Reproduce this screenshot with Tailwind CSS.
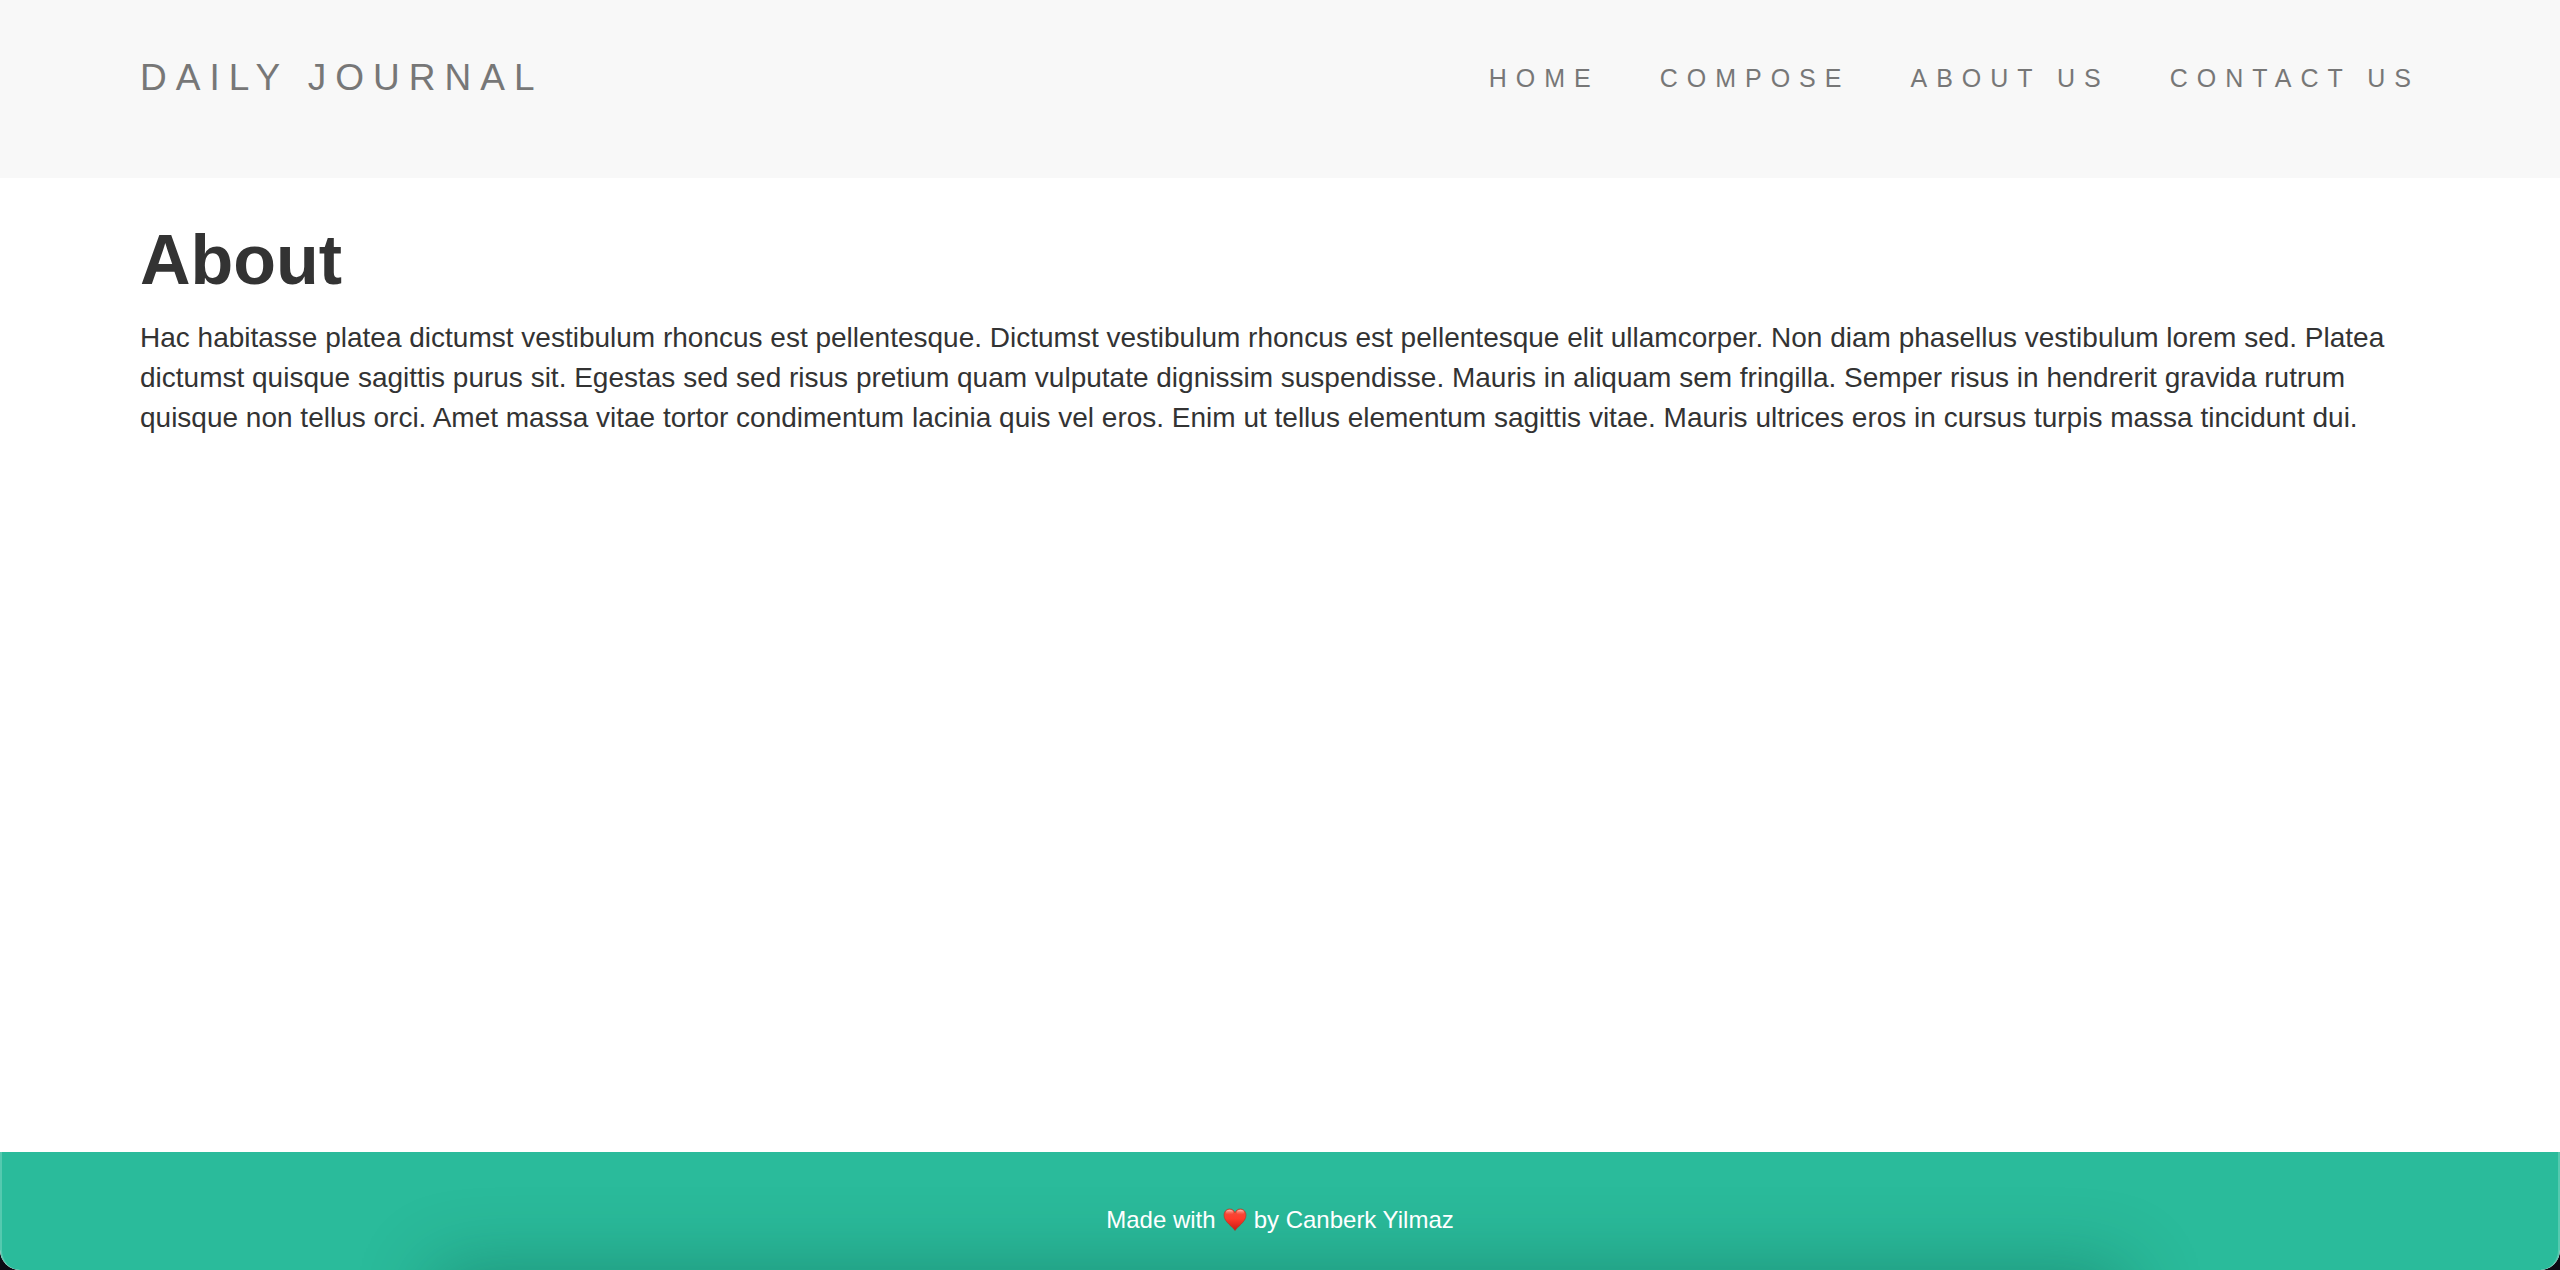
<!DOCTYPE html>
<html lang="en">
<head>
<meta charset="utf-8">
<meta name="viewport" content="width=device-width, initial-scale=1">
<title>Daily Journal</title>
<script src="https://cdn.jsdelivr.net/npm/@tailwindcss/browser@4"></script>
</head>
<body class="bg-[#0b0b14]">
<div class="flex min-h-screen flex-col overflow-hidden rounded-b-[20px] bg-white font-['Liberation_Sans',Arial,sans-serif] text-[28px] leading-10 text-[#333]">
  <header class="bg-[#f8f8f8] px-[140px] pt-[58px] pb-20">
    <nav class="flex flex-wrap items-center justify-between gap-x-10 text-[#777]">
      <a href="#" class="text-[37px] tracking-[9px]">DAILY JOURNAL</a>
      <ul class="flex flex-wrap gap-x-[60px] text-[25px] tracking-[9px]">
        <li><a href="#">HOME</a></li>
        <li><a href="#">COMPOSE</a></li>
        <li><a href="#">ABOUT US</a></li>
        <li><a href="#">CONTACT US</a></li>
      </ul>
    </nav>
  </header>
  <main class="flex-1 px-[140px] pt-[42px]">
    <h1 class="text-[70px] leading-[80px] font-bold">About</h1>
    <p class="mt-[18px]">Hac habitasse platea dictumst vestibulum rhoncus est pellentesque. Dictumst vestibulum rhoncus est pellentesque elit ullamcorper. Non diam phasellus vestibulum lorem sed. Platea dictumst quisque sagittis purus sit. Egestas sed sed risus pretium quam vulputate dignissim suspendisse. Mauris in aliquam sem fringilla. Semper risus in hendrerit gravida rutrum quisque non tellus orci. Amet massa vitae tortor condimentum lacinia quis vel eros. Enim ut tellus elementum sagittis vitae. Mauris ultrices eros in cursus turpis massa tincidunt dui.</p>
  </main>
  <footer class="relative overflow-hidden rounded-b-[20px] border-x-2 border-[#55c9af] bg-[#2abb9b] pt-12 pb-[30px] text-center text-[24px] text-white">
    <div class="absolute top-full right-[17%] left-[17%] h-40 shadow-[0_0_76px_4px_rgba(0,50,40,0.29)]"></div>
    <p class="relative flex items-center justify-center gap-[7px]">
      <span>Made with</span>
      <svg class="h-6 w-6" viewBox="0 0 24 24" role="img" aria-label="love">
        <defs>
          <linearGradient id="heart" x1="0" y1="0" x2="0" y2="1"><stop offset="0" stop-color="#f0503f"/><stop offset=".45" stop-color="#ff3b2b"/><stop offset="1" stop-color="#c81a12"/></linearGradient>
          <linearGradient id="shine" x1="0" y1="0" x2="0" y2="1"><stop offset="0" stop-color="#ffd5cc" stop-opacity=".9"/><stop offset="1" stop-color="#ff6a5a" stop-opacity="0"/></linearGradient>
        </defs>
        <path fill="url(#heart)" stroke="#a83a26" stroke-width=".6" d="M12 22.6C10 18.8 1 14 1 7.200C1 3.600 3.500 1 6.700 1C9.200 1 11.200 2.500 12 4.800C12.800 2.500 14.800 1 17.300 1C20.500 1 23 3.600 23 7.200C23 14 14 18.800 12 22.600Z"/>
        <ellipse cx="6.600" cy="4.300" rx="3.700" ry="2.600" fill="url(#shine)"/>
        <ellipse cx="17.400" cy="4.300" rx="3.700" ry="2.600" fill="url(#shine)"/>
      </svg>
      <span>by Canberk Yilmaz</span>
    </p>
  </footer>
</div>
</body>
</html>
